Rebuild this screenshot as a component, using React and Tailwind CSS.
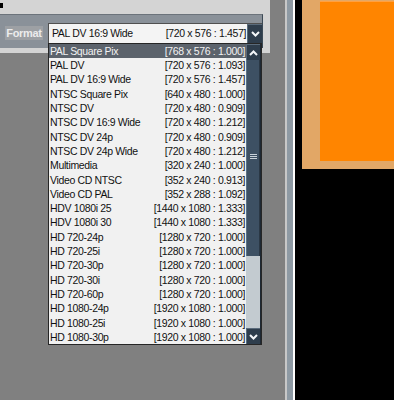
const formats = [
  ['PAL Square Pix', '[768 x 576 : 1.000]'],
  ['PAL DV', '[720 x 576 : 1.093]'],
  ['PAL DV 16:9 Wide', '[720 x 576 : 1.457]'],
  ['NTSC Square Pix', '[640 x 480 : 1.000]'],
  ['NTSC DV', '[720 x 480 : 0.909]'],
  ['NTSC DV 16:9 Wide', '[720 x 480 : 1.212]'],
  ['NTSC DV 24p', '[720 x 480 : 0.909]'],
  ['NTSC DV 24p Wide', '[720 x 480 : 1.212]'],
  ['Multimedia', '[320 x 240 : 1.000]'],
  ['Video CD NTSC', '[352 x 240 : 0.913]'],
  ['Video CD PAL', '[352 x 288 : 1.092]'],
  ['HDV 1080i 25', '[1440 x 1080 : 1.333]'],
  ['HDV 1080i 30', '[1440 x 1080 : 1.333]'],
  ['HD 720-24p', '[1280 x 720 : 1.000]'],
  ['HD 720-25i', '[1280 x 720 : 1.000]'],
  ['HD 720-30p', '[1280 x 720 : 1.000]'],
  ['HD 720-30i', '[1280 x 720 : 1.000]'],
  ['HD 720-60p', '[1280 x 720 : 1.000]'],
  ['HD 1080-24p', '[1920 x 1080 : 1.000]'],
  ['HD 1080-25i', '[1920 x 1080 : 1.000]'],
  ['HD 1080-30p', '[1920 x 1080 : 1.000]'],
];

function Chevron({ up }) {
  return (
    <svg width="9" height="6" viewBox="0 0 9 6">
      <path
        d={up ? 'M1 5 L4.5 1.5 L8 5' : 'M1 1 L4.5 4.5 L8 1'}
        fill="none"
        stroke="#f4f6f8"
        strokeWidth="2"
      />
    </svg>
  );
}

function ScrollButton({ up, className }) {
  return (
    <div className={`flex items-center justify-center bg-[#2e3d4c] border-l border-t border-[#5a6b7b] ${className}`}>
      <Chevron up={up} />
    </div>
  );
}

export default function App() {
  return (
    <div className="w-[394px] h-[400px] flex overflow-hidden font-['Liberation_Sans',Arial,sans-serif]">
      {/* left panel */}
      <div className="relative w-[285px] h-full bg-[#808080]">
        <div className="w-[270px] h-[53px] bg-[#d4d4d4] pt-[14px] pr-[7px] pb-[5px] relative">
          <div className="absolute left-0 top-[3px] w-[3px] h-[5px] bg-black" />
          <div className="h-full flex items-start bg-[#8a9199] border-t border-[#6c737b] border-r border-r-[#3c4a56]">
            <div className="mt-[11px] ml-[5px] w-[38px] h-[14px] bg-[#9da0a4] flex items-center justify-center text-[11px] font-bold tracking-[-0.3px] text-[#ececec]">
              Format
            </div>
            <div className="mt-[8px] ml-[5px] w-[214px] h-[20px] flex bg-[#f4f4f4] border-l border-t border-[#505050]">
              <div className="flex-1 flex items-center justify-between pl-[3px] pr-[1px] text-[10.5px] tracking-[-0.35px] text-[#111]">
                <span>PAL DV 16:9 Wide</span>
                <span>[720 x 576 : 1.457]</span>
              </div>
              <ScrollButton className="w-[15px]" />
            </div>
          </div>
        </div>

        {/* open dropdown list */}
        <div className="absolute left-[48px] top-[43px] w-[214px] flex border border-[#262626] bg-[#f1f1f1]">
          <div className="flex-1 flex flex-col">
            {formats.map(([name, size], i) => (
              <div
                key={name}
                className={`h-[14.3px] flex items-center justify-between pl-[1px] pr-[1px] text-[10.5px] tracking-[-0.35px] leading-none ${
                  i === 0 ? 'bg-[#5c636c] text-[#f2f2f2]' : 'text-[#111]'
                }`}
              >
                <span>{name}</span>
                <span>{size}</span>
              </div>
            ))}
          </div>
          <div className="w-[15px] flex flex-col border-r border-[#1e2833]">
            <ScrollButton up className="h-[16px]" />
            <div className="h-[196px] bg-[#3d5063] border-l border-[#5d7082] border-r border-r-[#2a3744] flex flex-col items-center justify-center gap-[1px] pb-[4px]">
              <div className="w-[7px] h-[1px] bg-[#c9d2da]" />
              <div className="w-[7px] h-[1px] bg-[#c9d2da]" />
              <div className="w-[7px] h-[1px] bg-[#c9d2da]" />
            </div>
            <div className="flex-1 bg-[#c3cbd0]" />
            <ScrollButton className="h-[16px]" />
          </div>
        </div>
      </div>

      {/* splitter */}
      <div className="w-[2px] h-full bg-[#c8c8c8]" />
      <div className="w-[6px] h-full bg-[#8e9aa4]" />
      <div className="w-[2px] h-full bg-white" />

      {/* preview */}
      <div className="flex-1 h-full bg-black pl-[7px]">
        <div className="w-full h-[169px] bg-[#e2a766] pl-[18px] pt-[1px] pb-[8px]">
          <div className="w-full h-full bg-[#ff8500] border-t border-[#ffa040]" />
        </div>
      </div>
    </div>
  );
}
